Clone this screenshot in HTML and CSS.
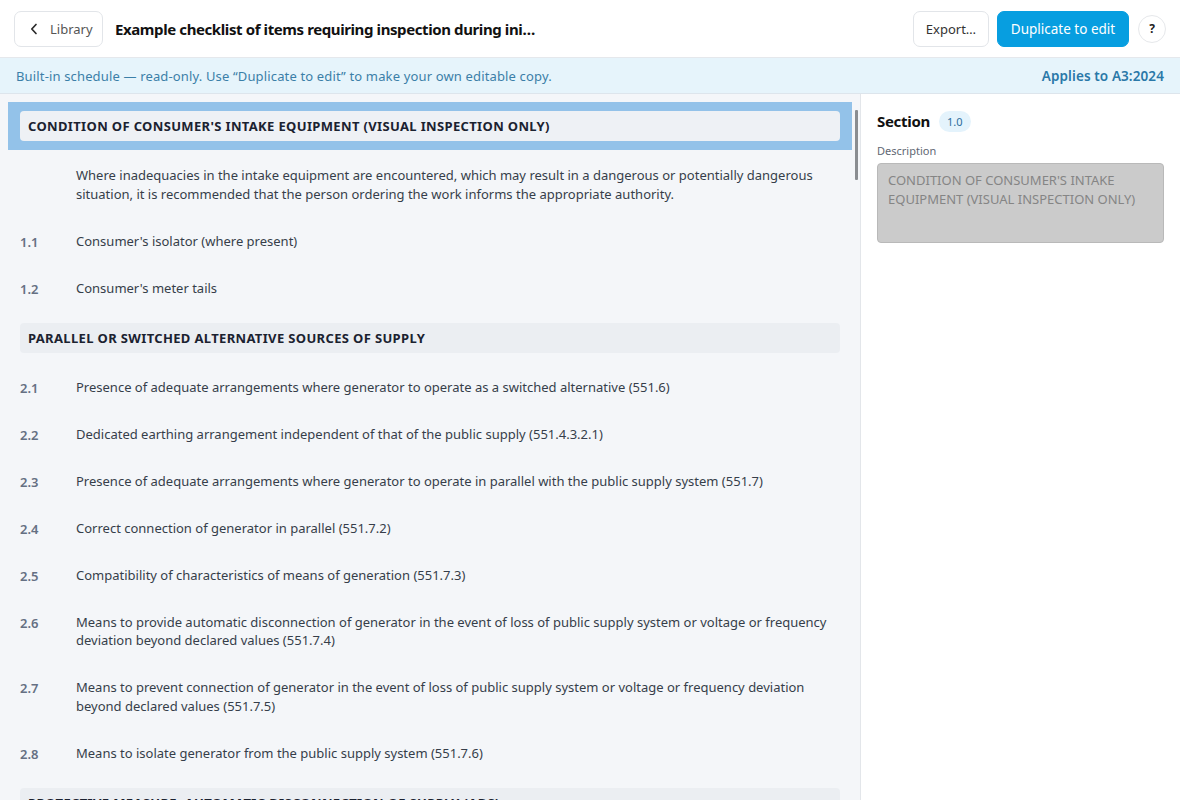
FILE: index.html
```html
<!DOCTYPE html>
<html>
<head>
<meta charset="utf-8">
<link rel="stylesheet" href="styles.css">
</head>
<body>
<div class="app">
  <header class="topbar">
    <button class="btn btn-back">
      <svg class="chev" width="8" height="12" viewBox="0 0 8 12"><path d="M6 1.5 L1.8 6 L6 10.5" fill="none" stroke="#2a2a2a" stroke-width="1.7" stroke-linecap="round" stroke-linejoin="round"/></svg>
      <span>Library</span>
    </button>
    <h1 class="title">Example checklist of items requiring inspection during ini…</h1>
    <div class="spacer"></div>
    <button class="btn btn-outline">Export…</button>
    <button class="btn btn-primary">Duplicate to edit</button>
    <button class="btn-help">?</button>
  </header>
  <div class="banner">
    <span>Built-in schedule — read-only. Use “Duplicate to edit” to make your own editable copy.</span>
    <span class="applies">Applies to A3:2024</span>
  </div>
  <div class="main">
    <div class="list-pane">
      <div class="scroll-thumb"></div>
      <div class="section selected"><div class="section-box">CONDITION OF CONSUMER'S INTAKE EQUIPMENT (VISUAL INSPECTION ONLY)</div></div>
      <div class="row"><span class="num"></span><span class="text">Where inadequacies in the intake equipment are encountered, which may result in a dangerous or potentially dangerous situation, it is recommended that the person ordering the work informs the appropriate authority.</span></div>
      <div class="row"><span class="num">1.1</span><span class="text">Consumer's isolator (where present)</span></div>
      <div class="row"><span class="num">1.2</span><span class="text">Consumer's meter tails</span></div>
      <div class="section"><div class="section-box">PARALLEL OR SWITCHED ALTERNATIVE SOURCES OF SUPPLY</div></div>
      <div class="row"><span class="num">2.1</span><span class="text">Presence of adequate arrangements where generator to operate as a switched alternative (551.6)</span></div>
      <div class="row"><span class="num">2.2</span><span class="text">Dedicated earthing arrangement independent of that of the public supply (551.4.3.2.1)</span></div>
      <div class="row"><span class="num">2.3</span><span class="text">Presence of adequate arrangements where generator to operate in parallel with the public supply system (551.7)</span></div>
      <div class="row"><span class="num">2.4</span><span class="text">Correct connection of generator in parallel (551.7.2)</span></div>
      <div class="row"><span class="num">2.5</span><span class="text">Compatibility of characteristics of means of generation (551.7.3)</span></div>
      <div class="row"><span class="num">2.6</span><span class="text">Means to provide automatic disconnection of generator in the event of loss of public supply system or voltage or frequency deviation beyond declared values (551.7.4)</span></div>
      <div class="row"><span class="num">2.7</span><span class="text">Means to prevent connection of generator in the event of loss of public supply system or voltage or frequency deviation beyond declared values (551.7.5)</span></div>
      <div class="row"><span class="num">2.8</span><span class="text">Means to isolate generator from the public supply system (551.7.6)</span></div>
      <div class="section"><div class="section-box">PROTECTIVE MEASURE: AUTOMATIC DISCONNECTION OF SUPPLY (ADS)</div></div>
    </div>
    <aside class="detail-pane">
      <div class="detail-head">
        <span class="detail-title">Section</span>
        <span class="badge">1.0</span>
      </div>
      <label class="field-label">Description</label>
      <div class="field-box">CONDITION OF CONSUMER'S INTAKE EQUIPMENT (VISUAL INSPECTION ONLY)</div>
    </aside>
  </div>
</div>
</body>
</html>
```
FILE: styles.css
```css
* { box-sizing: border-box; }
html, body { margin: 0; padding: 0; height: 100%; }
body {
  font-family: "Segoe UI", "Noto Sans", "Open Sans", sans-serif;
  font-size: 13px;
  color: #333b47;
  background: #fff;
  overflow: hidden;
}
.app { display: flex; flex-direction: column; height: 800px; }

.topbar {
  height: 58px;
  display: flex;
  align-items: center;
  padding: 0 14px;
  border-bottom: 1px solid #e5e8ec;
  background: #fff;
  flex: none;
}
.btn {
  font-family: inherit;
  font-size: 13px;
  height: 36px;
  border-radius: 7px;
  border: 1px solid #e2e5e9;
  background: #fff;
  color: #333;
  display: inline-flex;
  align-items: center;
  padding: 0 12px;
  cursor: pointer;
  white-space: nowrap;
}
.btn-back { width: 89px; gap: 12px; color: #555; padding-left: 15px; }
.chev { flex: none; }
.title {
  font-size: 15px;
  font-weight: 700;
  color: #111;
  margin: 0 0 0 12px;
  white-space: nowrap;
  letter-spacing: -0.4px;
}
.spacer { flex: 1; }
.btn-outline { width: 76px; justify-content: center; color: #333; padding: 0; }
.btn-primary {
  margin-left: 8px;
  width: 132px;
  justify-content: center;
  background: #079ee0;
  border-color: #079ee0;
  color: #fff;
  font-size: 13.5px;
  padding: 0;
}
.btn-help {
  margin-left: 9px;
  width: 28px;
  height: 28px;
  border-radius: 50%;
  border: 1px solid #e6e8eb;
  background: #fff;
  font-family: inherit;
  font-weight: 700;
  font-size: 12px;
  color: #222;
  padding: 0;
}

.banner {
  height: 36px;
  flex: none;
  display: flex;
  align-items: center;
  justify-content: space-between;
  padding: 0 16px;
  background: #e6f4fb;
  border-bottom: 1px solid #dde5ec;
  color: #3b7fa8;
  font-size: 13px;
  letter-spacing: 0.15px;
}
.applies { font-weight: 600; color: #2a78a8; font-size: 13.5px; letter-spacing: 0.1px; }

.main { flex: 1; display: flex; min-height: 0; }
.list-pane {
  position: relative;
  width: 861px;
  flex: none;
  background: #f4f6f9;
  border-right: 1px solid #e3e6ea;
  padding: 8px 8px 0 8px;
  overflow: hidden;
}
.scroll-thumb {
  position: absolute;
  left: 855px;
  top: 16px;
  width: 3px;
  height: 70px;
  background: #8a8d91;
  border-radius: 1px;
}
.section { padding: 9px 12px; margin: 2px 0; }
.section.selected { background: #93c2e9; margin-top: 0; }
.section-box {
  height: 30px;
  line-height: 30px;
  padding: 0 8px;
  border-radius: 4px;
  background: #ebeef2;
  font-weight: 700;
  color: #1b2230;
  font-size: 13px;
  letter-spacing: 0.35px;
  white-space: nowrap;
}
.section.selected .section-box { background: #eef1f5; }
.row {
  display: flex;
  padding: 14px 12px 14.5px 12px;
  line-height: 18.5px;
}
.num {
  width: 56px;
  flex: none;
  font-weight: 600;
  color: #657083;
  padding-top: 1px;
  margin-bottom: -1px;
}
.text { color: #363e4a; }

.detail-pane {
  flex: 1;
  padding: 14px 16px;
  background: #fff;
}
.detail-head { display: flex; align-items: center; gap: 9px; height: 26px; }
.detail-title { font-size: 15px; font-weight: 700; color: #111; letter-spacing: -0.3px; }
.badge {
  background: #e4f3fc;
  color: #2d6e9c;
  font-size: 11px;
  border-radius: 11px;
  padding: 2px 8px;
  line-height: 17px;
}
.field-label {
  display: block;
  margin-top: 9px;
  font-size: 11px;
  color: #5f6773;
}
.field-box {
  margin-top: 5px;
  height: 80px;
  border: 1px solid #b9b9b9;
  border-radius: 4px;
  background: #cbcbcb;
  color: #858585;
  padding: 7px 10px;
  line-height: 19px;
  font-size: 13px;
}
```
